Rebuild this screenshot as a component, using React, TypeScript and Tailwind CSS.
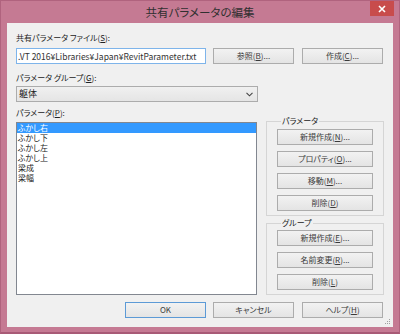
import React from "react";

function Btn({ children, def = false, w = "w-[81px]" }: { children: React.ReactNode; def?: boolean; w?: string }) {
  return (
    <div
      className={`${w} h-[16px] shrink-0 flex items-center justify-center border ${
        def ? "border-[#5c9ad6]" : "border-[#acacac]"
      } bg-linear-to-b from-[#f2f2f2] to-[#e4e4e4] text-[8px] leading-[10px] text-[#3a3a3a]`}
    >
      {children}
    </div>
  );
}

function U({ c }: { c: string }) {
  return <span className="underline underline-offset-[1px]">{c}</span>;
}

export default function App() {
  return (
    <div className="w-[400px] h-[334px] flex flex-col bg-[#c57a93] border border-[#b0637e] border-b-2 border-b-[#a85a76] font-['Noto_Sans_CJK_JP','Noto_Sans',sans-serif] [font-feature-settings:'palt']">
      {/* title bar */}
      <div className="h-[22px] flex items-start shrink-0">
        <div className="w-[29px]" />
        <div className="flex-1 text-center text-[11.5px] leading-[22px] text-[#303030]">共有パラメータの編集</div>
        <div className="w-[24px] h-[15px] mr-[5px] bg-[#c84c4c] flex items-center justify-center">
          <svg width="8" height="8" viewBox="0 0 8 8">
            <path d="M1 1 L7 7 M7 1 L1 7" stroke="#fff" strokeWidth="1.6" />
          </svg>
        </div>
      </div>
      {/* client */}
      <div className="relative mx-[6px] h-[304px] bg-[#f0f0f0] flex flex-col pt-[8px] pl-[9px] pr-[10px] text-[8px] text-[#222]">
        <div className="h-[14px] leading-[14px]">
          共有パラメータ ファイル(<U c="S" />):
        </div>
        <div className="mt-[3px] flex h-[16px]">
          <div className="w-[190px] h-[16px] border border-[#7eb4ea] bg-white overflow-hidden whitespace-nowrap pl-[1px] text-[8.5px] leading-[14px] text-[#333]">
            .VT 2016¥Libraries¥Japan¥RevitParameter.txt
          </div>
          <div className="ml-[7px]">
            <Btn>
              参照(<U c="B" />)...
            </Btn>
          </div>
          <div className="ml-[8px]">
            <Btn>
              作成(<U c="C" />)...
            </Btn>
          </div>
        </div>
        <div className="mt-[7px] h-[14px] leading-[14px]">
          パラメータ グループ(<U c="G" />):
        </div>
        <div className="mt-[1px] w-[242px] h-[16px] border border-[#acacac] bg-linear-to-b from-[#f0f0f0] to-[#e5e5e5] flex items-center justify-between pl-[2px] pr-[4px]">
          <span className="text-[9px] leading-[14px] text-[#222]">躯体</span>
          <svg width="7" height="5" viewBox="0 0 7 5">
            <path d="M0.5 0.8 L3.5 3.8 L6.5 0.8" stroke="#444" strokeWidth="1.1" fill="none" />
          </svg>
        </div>
        <div className="mt-[4px] flex">
          <div className="flex flex-col w-[242px]">
            <div className="h-[14px] leading-[14px]">
              パラメータ(<U c="P" />):
            </div>
            <div className="mt-[2px] h-[173px] border border-[#828790] bg-white text-[8px] leading-[10px] text-[#222]">
              <div className="h-[10px] bg-[#3399ff] text-white pl-[1px]">ふかし右</div>
              <div className="h-[10px] pl-[1px]">ふかし下</div>
              <div className="h-[10px] pl-[1px]">ふかし左</div>
              <div className="h-[10px] pl-[1px]">ふかし上</div>
              <div className="h-[10px] pl-[1px]">梁成</div>
              <div className="h-[10px] pl-[1px]">梁幅</div>
            </div>
          </div>
          <div className="ml-[9px] w-[117px] pt-[10px] flex flex-col">
            <fieldset className="border border-[#d5d5d5] px-[10px] pt-[3px] pb-[4px] flex flex-col gap-[6px]">
              <legend className="ml-[4px] px-[1px] text-[8px] leading-[10px]">パラメータ</legend>
              <Btn w="w-[96px]">
                新規作成(<U c="N" />)...
              </Btn>
              <Btn w="w-[96px]">
                プロパティ(<U c="O" />)...
              </Btn>
              <Btn w="w-[96px]">
                移動(<U c="M" />)...
              </Btn>
              <Btn w="w-[96px]">
                削除(<U c="D" />)
              </Btn>
            </fieldset>
            <fieldset className="mt-[2px] border border-[#d5d5d5] px-[10px] pt-[2px] pb-[4px] flex flex-col gap-[6px]">
              <legend className="ml-[4px] px-[1px] text-[8px] leading-[10px]">グループ</legend>
              <Btn w="w-[96px]">
                新規作成(<U c="E" />)...
              </Btn>
              <Btn w="w-[96px]">
                名前変更(<U c="R" />)...
              </Btn>
              <Btn w="w-[96px]">
                削除(<U c="L" />)
              </Btn>
            </fieldset>
          </div>
        </div>
        <div className="mt-auto mb-[9px] flex justify-end">
          <Btn def>OK</Btn>
          <div className="ml-[7px]">
            <Btn>キャンセル</Btn>
          </div>
          <div className="ml-[8px]">
            <Btn>
              ヘルプ(<U c="H" />)
            </Btn>
          </div>
        </div>
        <svg className="absolute right-[2px] bottom-[2px]" width="6" height="6" viewBox="0 0 6 6">
          <rect x="4" y="0" width="1" height="1" fill="#a0a0a0" />
          <rect x="2" y="2" width="1" height="1" fill="#a0a0a0" />
          <rect x="4" y="2" width="1" height="1" fill="#a0a0a0" />
          <rect x="0" y="4" width="1" height="1" fill="#a0a0a0" />
          <rect x="2" y="4" width="1" height="1" fill="#a0a0a0" />
          <rect x="4" y="4" width="1" height="1" fill="#a0a0a0" />
        </svg>
      </div>
    </div>
  );
}
